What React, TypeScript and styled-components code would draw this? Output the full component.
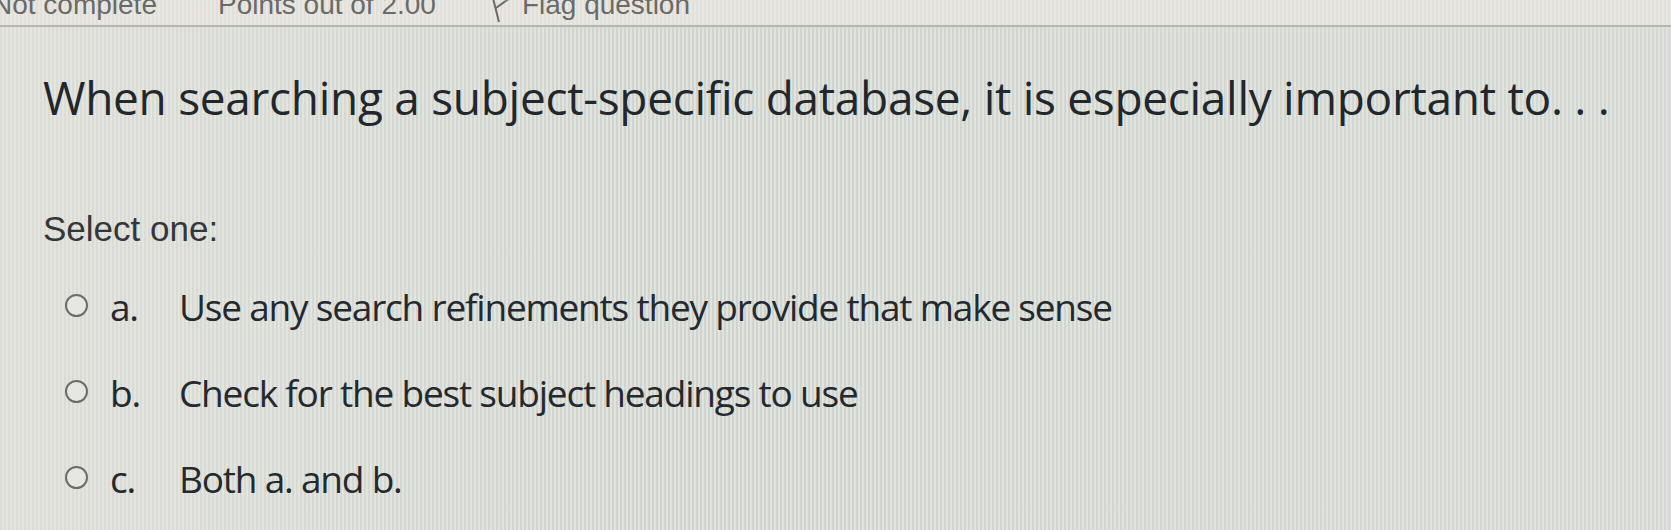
import React from 'react';
import styled, { createGlobalStyle } from 'styled-components';

const GlobalStyle = createGlobalStyle`
    html, body {
        margin: 0;
        padding: 0;
        width: 1671px;
        height: 530px;
        overflow: hidden;
        background: #d6d9d3;
    }
`;

const Page = styled.div`
    width: 1671px;
    height: 530px;
    display: flex;
    flex-direction: column;
    background:
        linear-gradient(90deg, rgba(235, 232, 226, 0.45) 0%, rgba(235, 232, 226, 0) 40%, rgba(225, 228, 224, 0.25) 100%),
        repeating-linear-gradient(90deg, #d0d4ce 0 2px, #e0e3de 2px 4px);
`;

const InfoBar = styled.div`
    height: 25px;
    flex-shrink: 0;
    overflow: hidden;
    display: flex;
    align-items: flex-start;
    background: repeating-linear-gradient(90deg, #e2e0db 0 2px, #e9e7e2 2px 4px);
    border-bottom: 2px solid #b3b6b1;
    font-family: 'Liberation Sans', Arial, sans-serif;
    font-size: 28px;
    color: #6a6a68;
    line-height: 30px;
`;

const InfoItem = styled.span<{ $offset: number }>`
    display: flex;
    align-items: flex-start;
    gap: 12px;
    margin-top: -10px;
    margin-left: ${(p) => p.$offset}px;
    white-space: nowrap;
`;

const Content = styled.div`
    padding: 0 0 0 43px;
    display: flex;
    flex-direction: column;
`;

const Question = styled.h1`
    margin: 40px 0 0 0;
    font-family: 'Open Sans', sans-serif;
    font-weight: 500;
    font-size: 46px;
    letter-spacing: -0.3px;
    line-height: 60px;
    color: #23272c;
`;

const Prompt = styled.div`
    margin-top: 82px;
    font-family: 'Liberation Sans', Arial, sans-serif;
    font-size: 35px;
    line-height: 40px;
    color: #34373a;
`;

const Options = styled.div`
    margin-top: 32px;
    display: flex;
    flex-direction: column;
    gap: 34px;
    padding-left: 22px;
`;

const Option = styled.label`
    display: flex;
    align-items: center;
    font-family: 'Open Sans', sans-serif;
    font-size: 37px;
    letter-spacing: -1.2px;
    line-height: 52px;
    color: #25292e;
`;

const Radio = styled.span`
    box-sizing: border-box;
    width: 23px;
    height: 23px;
    border: 2.5px solid #6b6d6b;
    border-radius: 50%;
    background: #e6e7e3;
    flex-shrink: 0;
    margin-right: 22px;
    margin-top: -4px;
`;

const Letter = styled.span`
    width: 69px;
    flex-shrink: 0;
`;

const FlagIcon = () => (
    <svg width="20" height="34" viewBox="0 0 20 34" fill="none" stroke="#6a6a68" strokeWidth="2">
        <path d="M2 4 L9 32" />
        <path d="M3 6 L17 10 L6 18" />
    </svg>
);

const options = [
    { letter: 'a.', text: 'Use any search refinements they provide that make sense' },
    { letter: 'b.', text: 'Check for the best subject headings to use' },
    { letter: 'c.', text: 'Both a. and b.' },
];

function App() {
    return (
        <Page>
            <GlobalStyle />
            <InfoBar>
                <InfoItem $offset={-8}>Not complete</InfoItem>
                <InfoItem $offset={61}>Points out of 2.00</InfoItem>
                <InfoItem $offset={54}>
                    <FlagIcon />
                    Flag question
                </InfoItem>
            </InfoBar>
            <Content>
                <Question>When searching a subject-specific database, it is especially important to. . .</Question>
                <Prompt>Select one:</Prompt>
                <Options>
                    {options.map((o) => (
                        <Option key={o.letter}>
                            <Radio />
                            <Letter>{o.letter}</Letter>
                            {o.text}
                        </Option>
                    ))}
                </Options>
            </Content>
        </Page>
    );
}

export default App;
